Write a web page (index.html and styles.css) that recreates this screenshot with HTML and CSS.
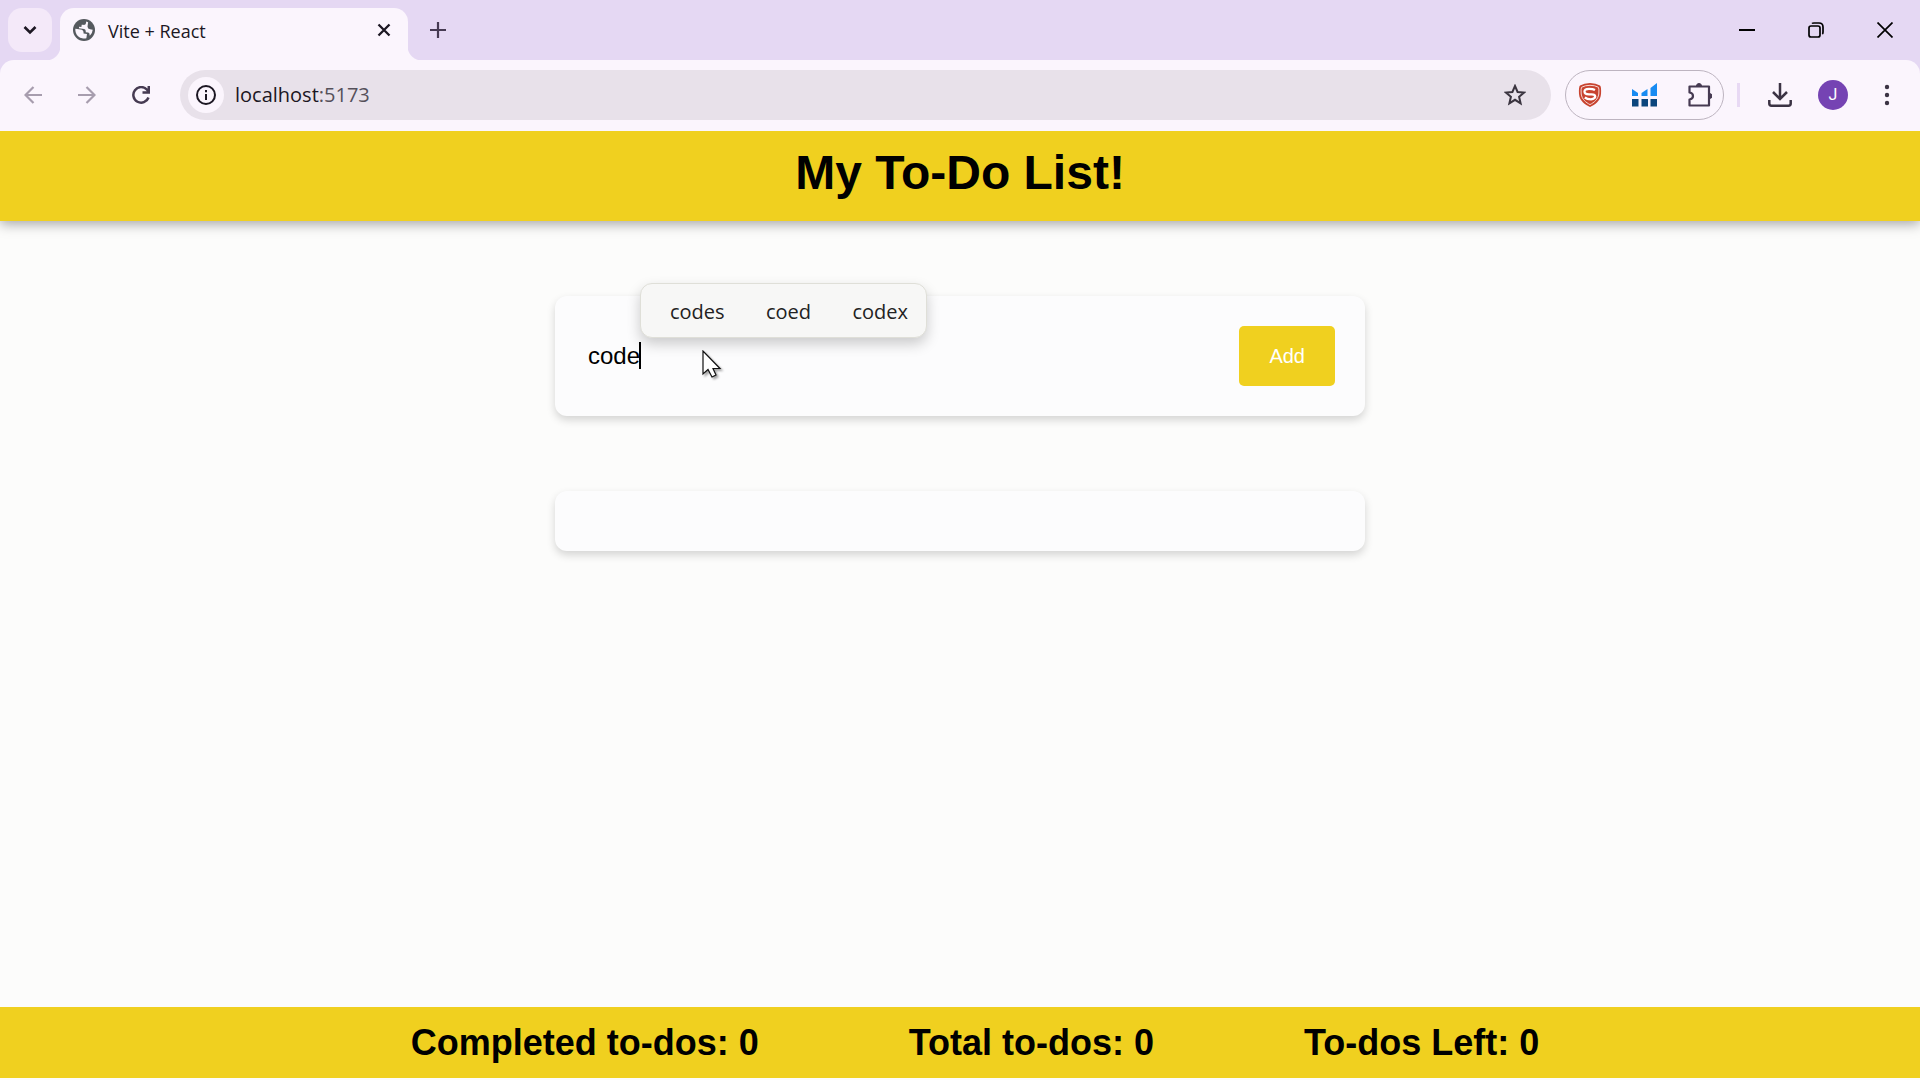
FILE: index.html
```html
<!DOCTYPE html>
<html lang="en">
<head>
<meta charset="utf-8">
<meta name="viewport" content="width=device-width, initial-scale=1">
<title>Vite + React</title>
<link rel="stylesheet" href="styles.css">
</head>
<body>
<div class="browser">
  <div class="tab-strip">
    <button class="tab-search" aria-label="Search tabs"><svg width="14" height="14" viewBox="0 0 14 14" fill="none" stroke="#1c1723" stroke-width="2.600"><path d="M1.500 4l5.500 5.500 5.500-5.500"/></svg></button>
    <div class="tab">
      <svg width="22" height="22" viewBox="0 0 22 22"><circle cx="11" cy="11" r="11" fill="#55595e"/><path d="M2.300 11H7.500Q11 11 11 14.500H14.500V18.800A8.700 8.700 0 0 1 2.300 11zM12 2.300V4Q12 6 9.500 6H8V8.500H5.700V10H11Q13 10 13 13H15.500Q17 13 17.500 15.800A8.700 8.700 0 0 0 19.600 9.500H17Q14 9.500 14 6.500V2.800z" fill="#fbf5fd" transform="rotate(8 11 11)"/></svg>
      <span class="tab-title">Vite + React</span>
      <button class="plain" aria-label="Close tab"><svg width="14" height="14" viewBox="0 0 14 14" stroke="#1c1723" stroke-width="2.300"><path d="M1.500 1.500l11 11M12.500 1.500l-11 11"/></svg></button>
    </div>
    <button class="plain new-tab" aria-label="New tab"><svg width="16" height="16" viewBox="0 0 16 16" stroke="#463a52" stroke-width="2.200"><path d="M8 0v16M0 8h16"/></svg></button>
    <div class="window-controls">
      <button class="plain" aria-label="Minimize"><svg width="16" height="16" viewBox="0 0 16 16" stroke="#000" stroke-width="2"><path d="M0 8h16"/></svg></button>
      <button class="plain" aria-label="Restore"><svg width="16" height="16" viewBox="0 0 16 16" fill="none" stroke="#000" stroke-width="1.700"><rect x="1" y="4" width="11" height="11" rx="2"/><path d="M4 1.500Q4.500 1 6 1h5q4 0 4 4v5q0 1.500-.7 2"/></svg></button>
      <button class="plain" aria-label="Close"><svg width="16" height="16" viewBox="0 0 16 16" stroke="#000" stroke-width="1.700"><path d="M.5.5l15 15M15.500.5l-15 15"/></svg></button>
    </div>
  </div>
  <div class="toolbar">
    <div class="nav">
      <button class="plain" aria-label="Back"><svg width="18" height="18" viewBox="0 0 18 18" fill="none" stroke="#a79dae" stroke-width="2.200"><path d="M18 9H1.500M9.500 1L1.500 9l8 8"/></svg></button>
      <button class="plain" aria-label="Forward"><svg width="18" height="18" viewBox="0 0 18 18" fill="none" stroke="#a79dae" stroke-width="2.200"><path d="M0 9h16.500M8.500 1l8 8-8 8"/></svg></button>
      <button class="plain" aria-label="Reload"><svg width="18" height="18" viewBox="0 0 18 18" fill="none" stroke="#463a52" stroke-width="2.500"><path d="M16.500 11.500A7.800 7.800 0 1 1 14.800 3.500L17 6M16.800 0v6.500H10.500"/></svg></button>
    </div>
    <div class="address">
      <button class="site-info" aria-label="Site information"><svg width="20" height="20" viewBox="0 0 20 20" fill="none" stroke="#1c1723" stroke-width="2"><circle cx="10" cy="10" r="9"/><path d="M10 9v6M10 5v2.200"/></svg></button>
      <div class="url"><span class="host">localhost</span>:5173</div>
      <button class="plain" aria-label="Bookmark"><svg width="22" height="22" viewBox="0 0 22 22" fill="none" stroke="#3a343f" stroke-width="2"><path d="M11 2l2.600 6 6.400.6-4.900 4.200 1.500 6.500L11 15.800l-5.600 3.500 1.500-6.500L2 8.600 8.400 8z"/></svg></button>
    </div>
    <div class="extensions">
      <button class="plain" aria-label="Shield extension"><svg width="24" height="24" viewBox="0 0 24 24"><path d="M12 0Q18 0 22 2.500 23.500 4 23 11C22.500 18 17 21.500 12 24 7 21.500 1.500 18 1 11Q.5 4 2 2.500 6 0 12 0z" fill="#c8432f"/><path d="M12 2.300Q17 2.300 20.500 4.300 21.200 6 20.800 11C20 16.500 16 19.500 12 21.600 8 19.500 4 16.500 3.200 11Q2.800 6 3.500 4.300 7 2.300 12 2.300z" fill="none" stroke="#f6d9d6"/><path d="M17 7Q15 5.800 11 5.800 6.500 5.800 6.500 8.500T11 11.300H13.500Q17.200 11.300 17.200 13.500T13 16.300Q9 16.300 6.800 14.500" fill="none" stroke="#fff" stroke-width="2.300"/></svg></button>
      <button class="plain" aria-label="Chart extension"><svg width="26" height="24" viewBox="0 0 26 24"><path d="M0 6l6 4v3H0zM9.500 13v-3L15.500 6v7zM18.500 13V5L25 0v13z" fill="#188bf2"/><path d="M0 16h6.500v7.500H0zM9.500 16H16v7.500H9.500zM18.500 16H25v7.500h-6.500z" fill="#0c467d"/></svg></button>
      <button class="plain" aria-label="Extensions"><svg width="24" height="24" viewBox="0 0 24 24" fill="none" stroke="#463a52" stroke-width="2.200" stroke-linejoin="round"><path d="M1.500 3.500h19.500v19H1.500v-6q3.500-.5 3.500-3.500t-3.500-3.500z"/><path d="M8.500 3a2.500 2.500 0 0 1 5 0zM21.500 10.500a2.500 2.500 0 0 1 0 5z" fill="#463a52" stroke-width="1"/></svg></button>
    </div>
    <span class="divider"></span>
    <button class="plain downloads" aria-label="Downloads"><svg width="24" height="24" viewBox="0 0 24 24" fill="none" stroke="#3b3344" stroke-width="2.500"><path d="M12 0v15M5 9l7 7 7-7M1.300 17v3.500q0 2.200 2.200 2.200h17q2.200 0 2.200-2.200V17"/></svg></button>
    <button class="avatar" aria-label="Profile">J</button>
    <button class="plain" aria-label="Menu"><svg width="6" height="22" viewBox="0 0 6 22" fill="#3b3344"><circle cx="3" cy="3" r="2.200"/><circle cx="3" cy="11" r="2.200"/><circle cx="3" cy="19" r="2.200"/></svg></button>
  </div>
</div>
<header class="header"><h1>My To-Do List!</h1></header>
<main class="main">
  <form class="card add-form">
    <div class="field">
      <input class="todo-input" type="text" value="code" aria-label="New to-do">
      <span class="caret"></span>
      <div class="suggestions"><button type="button">codes</button><button type="button">coed</button><button type="button">codex</button></div>
      <svg class="pointer" width="20" height="29" viewBox="0 0 20 29"><path d="M1 1v23l5-4.500 4 7.500 4-2-3-6.500h7z" fill="#fff" stroke="#111" stroke-width="1.200"/></svg>
    </div>
    <button class="add" type="button">Add</button>
  </form>
  <div class="card"></div>
</main>
<footer class="footer">
  <span>Completed to-dos: 0</span>
  <span>Total to-dos: 0</span>
  <span>To-dos Left: 0</span>
</footer>
</body>
</html>
```
FILE: styles.css
```css
* { box-sizing: border-box; }
body {
  margin: 0;
  min-height: 100vh;
  padding-bottom: 2px;
  display: flex;
  flex-direction: column;
  background: #fcfcfb;
  color: #000;
  font-family: "Liberation Sans", Arial, sans-serif;
}
button { border: 0; padding: 0; background: none; font: inherit; }
svg { display: block; }
.plain { display: flex; }

.browser {
  position: relative; z-index: 1;
  background: #e5d8f3; color: #1c1723; font-family: "Open Sans", "Noto Sans", sans-serif;
}
.tab-strip { display: flex; height: 60px; align-items: center; padding-left: 8px; }
.tab-search {
  display: flex; align-items: center; justify-content: center;
  width: 44px; height: 44px; border-radius: 14px; background: #f4e9f9;
}
.tab {
  position: relative;
  display: flex; align-items: center; gap: 13px;
  width: 348px; height: 52px; margin: 8px 0 0 8px; padding: 0 17px 8px 13px;
  border-radius: 14px 14px 0 0; background: #fbf5fd;
}
.tab::before, .tab::after {
  content: ""; position: absolute; bottom: 0; width: 14px; height: 14px;
}
.tab::before { right: 100%; background: radial-gradient(circle at 0 0, transparent 14px, #fbf5fd 15px); }
.tab::after { left: 100%; background: radial-gradient(circle at 100% 0, transparent 14px, #fbf5fd 15px); }
.tab-title { flex: 1; padding-top: 2px; font-size: 18px; line-height: 24px; }
.new-tab { margin-left: 22px; }
.window-controls { display: flex; gap: 53px; margin-left: auto; padding-right: 27px; }

.toolbar {
  display: flex; align-items: center; height: 71px; padding: 0 30px 2px 24px;
  border-radius: 14px 14px 0 0; background: #fbf5fd;
}
.nav { display: flex; gap: 36px; }
.address {
  flex: 1; display: flex; align-items: center; height: 50px;
  margin: 0 14px 0 30px; padding: 0 25px 0 8px; border-radius: 25px; background: #e8e1ea;
}
.site-info {
  display: flex; align-items: center; justify-content: center;
  width: 36px; height: 36px; border-radius: 50%; background: #fbf5fd;
}
.url { flex: 1; margin-left: 11px; font-size: 20px; line-height: 28px; color: #55505a; }
.host { color: #1c1723; }
.extensions {
  display: flex; align-items: center; justify-content: space-between;
  width: 159px; height: 50px; padding: 0 11px 0 12px;
  border: 1px solid #bdb4c0; border-radius: 25px;
}
.divider { width: 3px; height: 24px; margin: 0 28px 0 13px; background: #e8d9f4; }
.downloads { margin-right: 26px; }
.avatar {
  width: 30px; height: 30px; margin-right: 36px; border-radius: 50%;
  background: #7543b3; color: #fff; font-family: Roboto, sans-serif; font-size: 16px; line-height: 30px;
}

.header {
  padding: 12px 0 18px; background: #f0d01f; text-align: center;
  box-shadow: 0 3px 12px rgba(0, 0, 0, .35);
}
.header h1 { margin: 0; font-size: 48px; line-height: 60px; }
.main {
  flex: 1; display: flex; flex-direction: column; align-items: center; gap: 75px;
  padding: 75px 20px;
}
.card {
  width: 100%; max-width: 810px; padding: 30px; border-radius: 12px;
  background: #fcfcfd; box-shadow: 0 4px 9px rgba(0, 0, 0, .16);
}
.add-form { display: flex; }
.field { position: relative; flex: 1; display: flex; }
.todo-input {
  width: 100%; border: 0; padding: 0 3px; background: none; outline: none;
  font: inherit; font-size: 24px; color: #000;
}
.caret { position: absolute; left: 54px; top: 16px; width: 2px; height: 27px; background: #000; }
.suggestions {
  position: absolute; left: 55px; bottom: 48px;
  display: flex; align-items: center; justify-content: space-between;
  width: 287px; height: 55px; padding: 2px 18px 0 29px;
  border: 1px solid #dfdfd8; border-radius: 12px; background: #f7f7f6;
  box-shadow: 0 6px 14px rgba(0, 0, 0, .2);
  font-family: "Open Sans", "Noto Sans", sans-serif; font-size: 20px; color: #222;
}
.suggestions button { color: inherit; }
.pointer { position: absolute; left: 117px; top: 24px; filter: drop-shadow(2px 2px 1px rgba(0, 0, 0, .35)); }
.add {
  padding: 0 30px; border-radius: 5px; background: #f0d01f; color: #fff;
  font-size: 20px; line-height: 60px;
}
.footer {
  display: flex; flex-wrap: wrap; justify-content: center; gap: 0 150px;
  padding: 15px 0 15px 30px; background: #f0d01f;
  font-size: 36px; font-weight: bold; line-height: 41px;
}
```
